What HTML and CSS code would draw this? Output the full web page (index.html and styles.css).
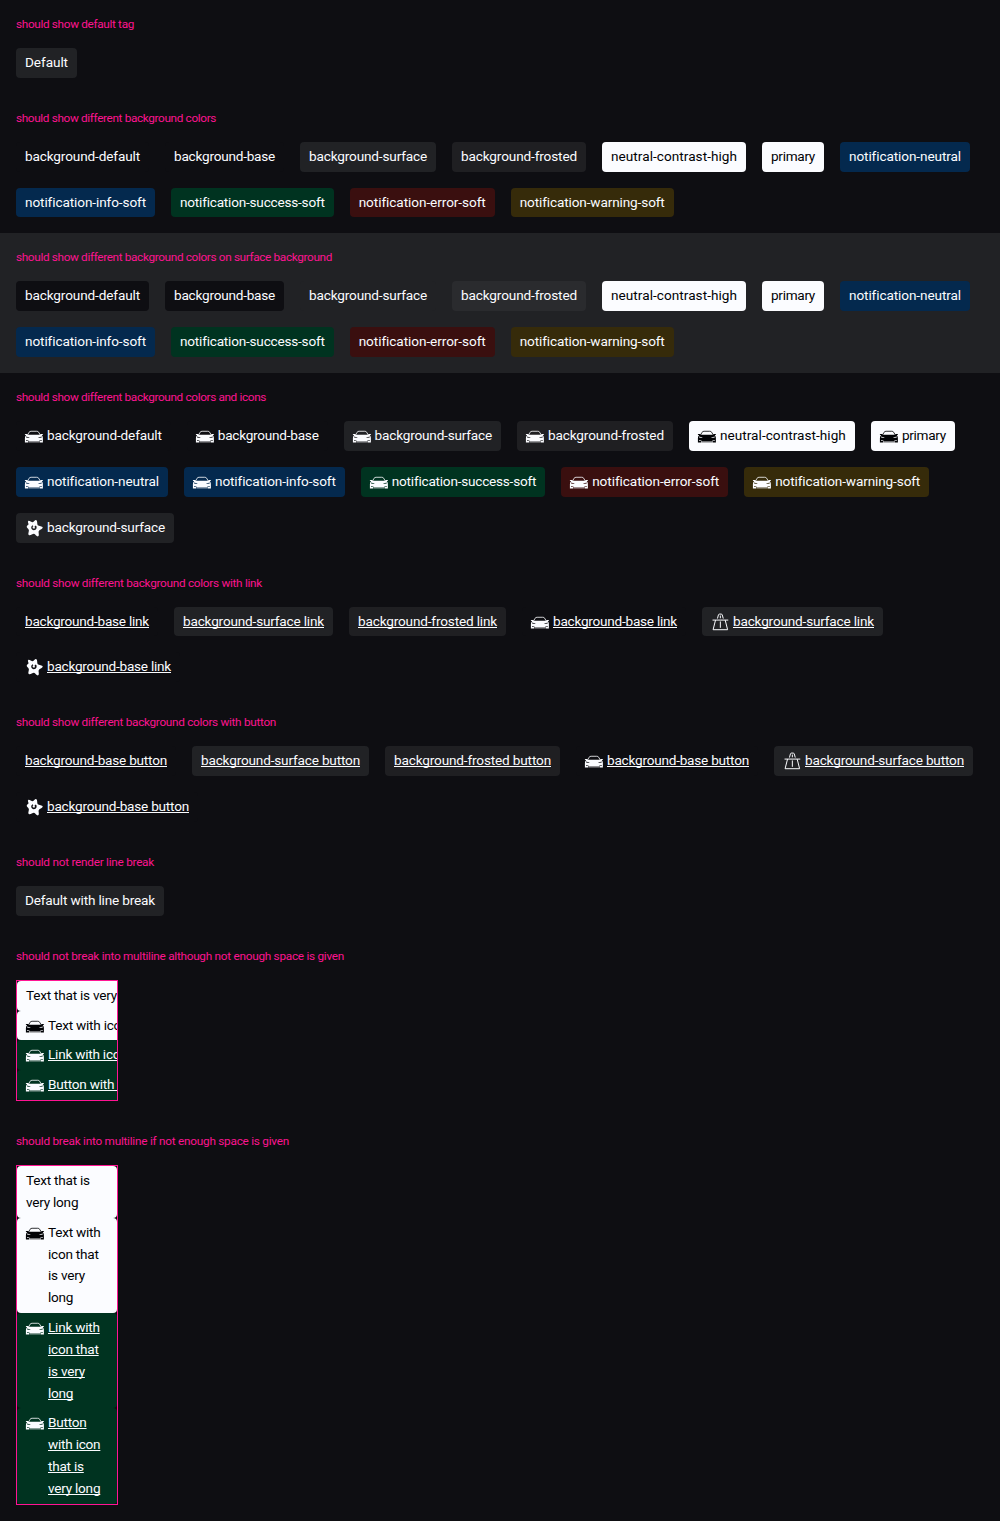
FILE: index.html
```html
<!DOCTYPE html>
<html lang="en">
<head>
<meta charset="utf-8">
<title>Tag</title>
<link rel="stylesheet" href="styles.css">
<script src="tags.js" defer></script>
</head>
<body>
<svg class="defs" aria-hidden="true">
  <symbol id="car" viewBox="0 0 24 24">
    <path fill="none" stroke="currentColor" stroke-width=".9" d="M5 11 6.700 8Q7.400 6.900 8.900 6.900h6.200q1.500 0 2.200 1.100L19 11"/>
    <path fill="currentColor" fill-rule="evenodd" d="M2.100 9.900h2.200l1 .900h13.400l1-.900h2.200v.900l-1.300.500c.9.900 1.300 1.800 1.300 3v5h-3.700V17.500H5.800v1.800H2.100v-5c0-1.200.4-2.100 1.300-3l-1.300-.5zM3.400 12.700v1l3.400.700.300-.500zM20.600 12.700l-3.700 1.200.3.500 3.400-.7zM3.300 16.500v.800l2.700.200v-.500zM20.700 16.500l-2.700.500v.500l2.700-.200z"/>
    <path fill="currentColor" opacity=".55" d="M6.300 17.500h11.400v1.700H6.300z"/>
  </symbol>
  <symbol id="highway" viewBox="0 0 24 24">
    <path fill="none" stroke="currentColor" stroke-width="1.100" d="M3.900 10h17.300M7.200 10 4.500 20.600h16L17.800 10M12.500 11.500v7M9.300 8.300 10.400 4.300q.3-.9 1.100-.9h2q.8 0 1.100.9L15.700 8.300M12.500 5V8"/>
  </symbol>
  <symbol id="star" viewBox="0 0 24 24">
    <path fill="currentColor" fill-rule="evenodd" d="M5.800 4.300c1.300-.5 3.400 1.600 4.900 1.600C12.100 5.700 13.100 3 14.600 3.500c1.500.6.700 4.100 1.700 5.500 1.200 1.100 5.200.9 5.400 2.600.1 1.600-3.900 2.600-4.400 4-.5 1.600 1 4.900-.7 5.700-1.500.6-3-2.700-4.500-2.900-1.600-.1-4.200 2.400-5.700 1.400-1.300-1 .4-4 0-5.500C6.100 12.900 3.900 11.900 4.100 10.500 4.300 9.300 6 9.200 6.100 8.100 6.100 7 4.700 5.100 5.800 4.300zM10.400 9.100c-1.600 1-1.800 3.500-.4 4.700 1.600 1.300 4.400.6 4.900-1.400l.1-1.900-1.300-1.200-1.200 1.600.9.8c-.6 1.300-2.200 1.300-2.700.3-.4-.9.2-1.500.8-1.700z"/>
  </symbol>
</svg>

<section class="block">
  <h2 class="title" data-width="118">should show default tag</h2>
  <div class="tags"><span class="tag surface"><span class="label" data-width="43">Default</span></span></div>
</section>

<section class="block">
  <h2 class="title" data-width="200">should show different background colors</h2>
  <div class="tags">
    <span class="tag base"><span class="label" data-width="115">background-default</span></span>
    <span class="tag base"><span class="label" data-width="101">background-base</span></span>
    <span class="tag surface"><span class="label" data-width="118">background-surface</span></span>
    <span class="tag frosted"><span class="label" data-width="116">background-frosted</span></span>
    <span class="tag high"><span class="label" data-width="126">neutral-contrast-high</span></span>
    <span class="tag high"><span class="label" data-width="44">primary</span></span>
    <span class="tag info"><span class="label" data-width="112">notification-neutral</span></span>
    <span class="tag info"><span class="label" data-width="121">notification-info-soft</span></span>
    <span class="tag success"><span class="label" data-width="144.7">notification-success-soft</span></span>
    <span class="tag error"><span class="label" data-width="127">notification-error-soft</span></span>
    <span class="tag warning"><span class="label" data-width="145">notification-warning-soft</span></span>
  </div>
</section>

<section class="block on-surface">
  <h2 class="title" data-width="316">should show different background colors on surface background</h2>
  <div class="tags">
    <span class="tag base"><span class="label" data-width="115">background-default</span></span>
    <span class="tag base"><span class="label" data-width="101">background-base</span></span>
    <span class="tag surface"><span class="label" data-width="118">background-surface</span></span>
    <span class="tag frosted"><span class="label" data-width="116">background-frosted</span></span>
    <span class="tag high"><span class="label" data-width="126">neutral-contrast-high</span></span>
    <span class="tag high"><span class="label" data-width="44">primary</span></span>
    <span class="tag info"><span class="label" data-width="112">notification-neutral</span></span>
    <span class="tag info"><span class="label" data-width="121">notification-info-soft</span></span>
    <span class="tag success"><span class="label" data-width="144.7">notification-success-soft</span></span>
    <span class="tag error"><span class="label" data-width="127">notification-error-soft</span></span>
    <span class="tag warning"><span class="label" data-width="145">notification-warning-soft</span></span>
  </div>
</section>

<section class="block">
  <h2 class="title" data-width="250">should show different background colors and icons</h2>
  <div class="tags">
    <span class="tag base"><svg class="icon"><use href="#car"/></svg><span class="label" data-width="114.8">background-default</span></span>
    <span class="tag base"><svg class="icon"><use href="#car"/></svg><span class="label" data-width="100.8">background-base</span></span>
    <span class="tag surface"><svg class="icon"><use href="#car"/></svg><span class="label" data-width="117.4">background-surface</span></span>
    <span class="tag frosted"><svg class="icon"><use href="#car"/></svg><span class="label" data-width="115.9">background-frosted</span></span>
    <span class="tag high"><svg class="icon"><use href="#car"/></svg><span class="label" data-width="126">neutral-contrast-high</span></span>
    <span class="tag high"><svg class="icon"><use href="#car"/></svg><span class="label" data-width="44">primary</span></span>
    <span class="tag info"><svg class="icon"><use href="#car"/></svg><span class="label" data-width="112">notification-neutral</span></span>
    <span class="tag info"><svg class="icon"><use href="#car"/></svg><span class="label" data-width="120.8">notification-info-soft</span></span>
    <span class="tag success"><svg class="icon"><use href="#car"/></svg><span class="label" data-width="144.4">notification-success-soft</span></span>
    <span class="tag error"><svg class="icon"><use href="#car"/></svg><span class="label" data-width="127">notification-error-soft</span></span>
    <span class="tag warning"><svg class="icon"><use href="#car"/></svg><span class="label" data-width="145">notification-warning-soft</span></span>
    <span class="tag surface"><svg class="icon"><use href="#star"/></svg><span class="label" data-width="118">background-surface</span></span>
  </div>
</section>

<section class="block">
  <h2 class="title" data-width="246">should show different background colors with link</h2>
  <div class="tags">
    <span class="tag base"><a href="#" class="label" data-width="124">background-base link</a></span>
    <span class="tag surface"><a href="#" class="label" data-width="141">background-surface link</a></span>
    <span class="tag frosted"><a href="#" class="label" data-width="139">background-frosted link</a></span>
    <span class="tag base"><svg class="icon"><use href="#car"/></svg><a href="#" class="label" data-width="124">background-base link</a></span>
    <span class="tag surface"><svg class="icon"><use href="#highway"/></svg><a href="#" class="label" data-width="141">background-surface link</a></span>
    <span class="tag base"><svg class="icon"><use href="#star"/></svg><a href="#" class="label" data-width="124">background-base link</a></span>
  </div>
</section>

<section class="block">
  <h2 class="title" data-width="260">should show different background colors with button</h2>
  <div class="tags">
    <span class="tag base"><button class="label" data-width="142">background-base button</button></span>
    <span class="tag surface"><button class="label" data-width="159">background-surface button</button></span>
    <span class="tag frosted"><button class="label" data-width="157">background-frosted button</button></span>
    <span class="tag base"><svg class="icon"><use href="#car"/></svg><button class="label" data-width="142">background-base button</button></span>
    <span class="tag surface"><svg class="icon"><use href="#highway"/></svg><button class="label" data-width="159">background-surface button</button></span>
    <span class="tag base"><svg class="icon"><use href="#star"/></svg><button class="label" data-width="142">background-base button</button></span>
  </div>
</section>

<section class="block">
  <h2 class="title" data-width="138">should not render line break</h2>
  <div class="tags"><span class="tag surface"><span class="label" data-width="130">Default with line break</span></span></div>
</section>

<section class="block">
  <h2 class="title" data-width="328">should not break into multiline although not enough space is given</h2>
  <div class="narrow">
    <span class="tag high"><span class="label">Text that is very long</span></span>
    <span class="tag high"><svg class="icon"><use href="#car"/></svg><span class="label">Text with icon that is very long</span></span>
    <span class="tag success"><svg class="icon"><use href="#car"/></svg><a href="#" class="label">Link with icon that is very long</a></span>
    <span class="tag success"><svg class="icon"><use href="#car"/></svg><button class="label">Button with icon that is very long</button></span>
  </div>
</section>

<section class="block">
  <h2 class="title" data-width="273">should break into multiline if not enough space is given</h2>
  <div class="narrow multiline">
    <span class="tag high"><span class="label">Text that is very long</span></span>
    <span class="tag high"><svg class="icon"><use href="#car"/></svg><span class="label">Text with icon that is very long</span></span>
    <span class="tag success"><svg class="icon"><use href="#car"/></svg><a href="#" class="label">Link with icon that is very long</a></span>
    <span class="tag success"><svg class="icon"><use href="#car"/></svg><button class="label">Button with icon that is very long</button></span>
  </div>
</section>
</body>
</html>
```
FILE: styles.css
```css
* { box-sizing: border-box; }

body {
  margin: 0;
  background: #0e0e12;
  color: #fbfcff;
  font-family: Roboto, "Liberation Sans", sans-serif;
  font-size: 13.6px;
  font-variant-ligatures: none;
  line-height: 21.83px;
}

.defs { display: none; }

.block { padding: 16px; }
.on-surface { background: #212225; }

.title {
  width: max-content;
  margin: 0 0 16px;
  color: #fc1490;
  font-size: 11.8px;
  font-weight: 400;
  line-height: 16px;
  white-space: nowrap;
}

.tags {
  display: flex;
  flex-wrap: wrap;
  gap: 16px;
}

.tag {
  display: flex;
  align-items: flex-start;
  padding: 4px 9px;
  border-radius: 4px;
  white-space: nowrap;
}

.base { background: #0e0e12; }
.surface { background: #212225; }
.frosted { background: #1f1f22; }
.on-surface .frosted { background: #2a2b2e; }
.high { background: #fbfcff; color: #010205; }
.info { background: #04294e; }
.success { background: #003320; }
.error { background: #3a0f0f; }
.warning { background: #362b0a; }

.icon {
  flex: none;
  width: 21.8px;
  height: 21.8px;
  margin: 0 2px 0 -1.8px;
}

.label {
  display: block;
  flex: none;
}

a.label,
button.label {
  padding: 0;
  border: 0;
  background: none;
  color: inherit;
  font: inherit;
  font-variant-ligatures: none;
  text-align: left;
  text-decoration: underline;
  text-decoration-thickness: 1px;
  text-underline-offset: 1px;
  text-decoration-skip-ink: none;
}

.narrow {
  width: 102px;
  overflow: hidden;
  border: 1px solid #ff1493;
}

.narrow .tag { width: max-content; }
.narrow .label { letter-spacing: -0.24px; }
.narrow.multiline .tag { width: auto; white-space: normal; }
.multiline .label { flex: 0 1 auto; }
```
FILE: tags.js
```js
// Tracks each text so that it fills its nominal width.
document.querySelectorAll("[data-width]").forEach((el) => {
  const natural = el.getBoundingClientRect().width;
  const spacing = (Number(el.dataset.width) - natural) / el.textContent.length;
  el.style.letterSpacing = spacing + "px";
});
```
